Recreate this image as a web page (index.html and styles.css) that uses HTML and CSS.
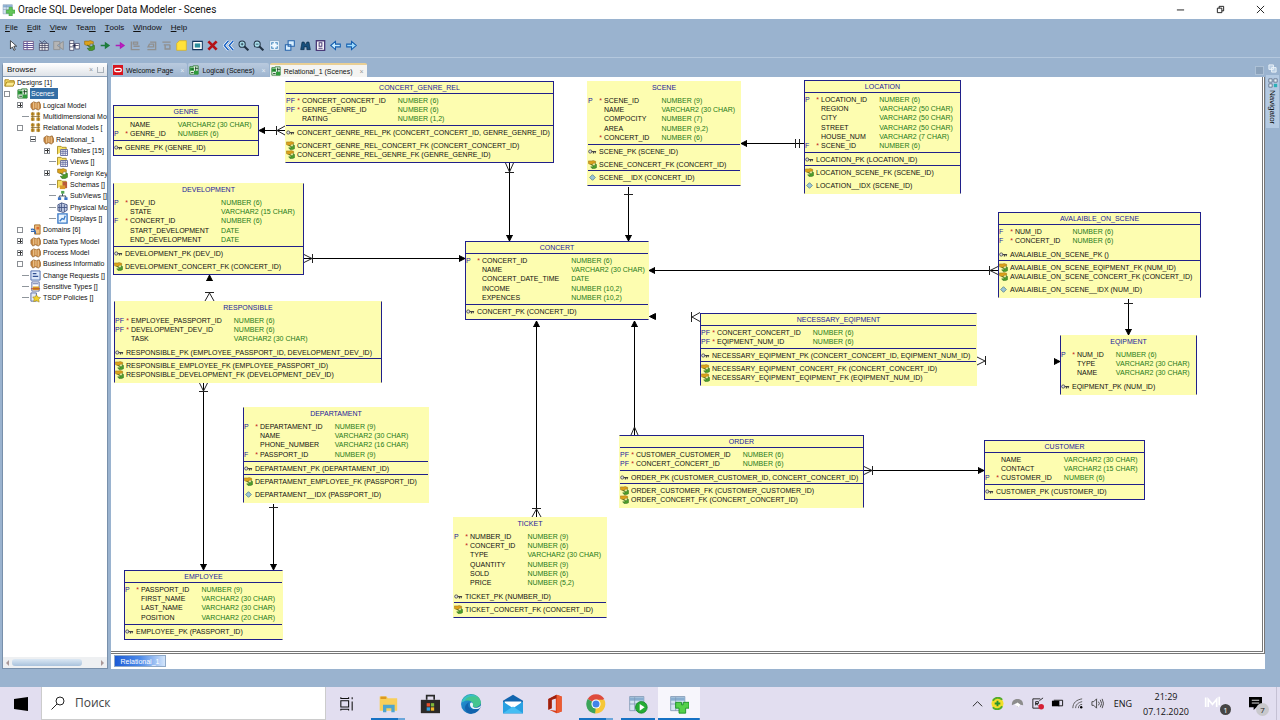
FILE: index.html
```html
<!DOCTYPE html>
<html lang="en">
<head>
<meta charset="utf-8">
<title>Oracle SQL Developer Data Modeler - Scenes</title>
<link rel="stylesheet" href="styles.css">
</head>
<body>
<svg class="defs" width="0" height="0" aria-hidden="true">
<defs>
<linearGradient id="gEdge" x1="0" y1="0" x2="1" y2="1"><stop offset="0" stop-color="#2a9fdc"/><stop offset="1" stop-color="#0c59a4"/></linearGradient>
<symbol id="pk" viewBox="0 0 10 8"><circle cx="2.5" cy="4" r="1.8" fill="#ddd" stroke="#555"/><path d="M4 4h5M6 4v2.200M8 4v2" stroke="#444" stroke-width="1.300" fill="none"/></symbol>
<symbol id="fk" viewBox="0 0 10 10"><path d="M.5 1h4l1-.5 3 1v2h-3v1.500h-3L.5 4z" fill="#dca21c" stroke="#8a6410" stroke-width=".5"/><path d="M3 4.500l2 1.500h3v-2l1.500 1v3.500l-2 1h-3l-1.500-2h3z" fill="#4a9e28" stroke="#28601a" stroke-width=".5"/></symbol>
<symbol id="ix" viewBox="0 0 8 8"><path d="M4 1.500L6.500 4 4 6.500 1.500 4z" fill="#9cc6d8" stroke="#5f8894" stroke-width=".8"/></symbol>
<symbol id="folder" viewBox="0 0 12 12"><path d="M1 10V3h4l1 1h5v2" fill="#f5dc6a" stroke="#a8861a"/><path d="M1 10l2-4.500h9L10 10z" fill="#fbe98b" stroke="#a8861a"/></symbol>
<symbol id="design" viewBox="0 0 12 12"><path d="M1 2h4V1h6v10H1z" fill="#e8f4e8" stroke="#2c7a34"/><path d="M1 3h5v4H1zM6 7h5v4H6z" fill="#2f9c3c"/><path d="M2.500 9h3M3 5h2M8 2v5M7 4h4" stroke="#153f1d"/></symbol>
<symbol id="model" viewBox="0 0 12 12"><path d="M1 4l3-2 3 1 3-1 1.500 3v4L9 11 6 9.500 3 11 1 8z" fill="#c98a45" stroke="#8a5724" stroke-width=".7"/><path d="M4 2.500v7M6.500 3v6M9 3v7" stroke="#f1cf9c"/></symbol>
<symbol id="multi" viewBox="0 0 12 12"><path d="M1 1.500h4v3.500H1zM7 1.500h4v3.500H7zM1 7h4v3.500H1zM7 7h4v3.500H7z" fill="#c8962f"/><path d="M3 1v10M9 1v10M1 6h10" stroke="#7e5d1a" stroke-width=".8"/></symbol>
<symbol id="tables" viewBox="0 0 12 12"><path d="M.5 10V1.500h4l1 1H10V5" fill="#f6de62" stroke="#a88c20"/><path d="M4 5h7.500v6.500H4z" fill="#fff" stroke="#59639b"/><path d="M4 7h7M4 9h7M6.500 5v6M9 5v6" stroke="#59639b" stroke-width=".8"/></symbol>
<symbol id="schema" viewBox="0 0 12 12"><path d="M.5 10V1.500h4l1 1H10V5" fill="#f6de62" stroke="#a88c20"/><path d="M6 3h5v7H6z" fill="#b95a3a"/><path d="M3 7h6v4H3z" fill="#db9b2c"/></symbol>
<symbol id="sub" viewBox="0 0 12 12"><path d="M4.500 1h3.500v3H4.500z" fill="#4fa64f"/><path d="M1 8h3.500v3H1zM8 8h3.500v3H8z" fill="#3b73c8"/><path d="M6 4v2.500M2.500 8V6.500h7V8" stroke="#345" fill="none"/></symbol>
<symbol id="phys" viewBox="0 0 12 12"><path d="M1 3l4-2 6 2v6l-4 2.500-6-2z" fill="#c5d0e8" stroke="#445584"/><path d="M3 3v7M5 1v9M8 3v8M1 6h10" stroke="#445584"/></symbol>
<symbol id="disp" viewBox="0 0 12 12"><path d="M1 1h10v10H1z" fill="#e9f5ff" stroke="#3a7ac8" stroke-width="1.500"/><path d="M3 9l2.500-3 2 1L9 3" fill="none" stroke="#3a7ac8" stroke-width="1.500"/></symbol>
<symbol id="domain" viewBox="0 0 12 12"><path d="M5 1h6v10H5z" fill="#f0c183" stroke="#a56b25"/><path d="M7 3h3v3H7z" fill="#d96f33"/><path d="M1 6c3-1 5 0 5 5M1 8h4" stroke="#356bb5" stroke-width="1.500" fill="none"/></symbol>
<symbol id="req" viewBox="0 0 12 12"><path d="M1 1h10v10H1z" fill="#dce8fa" stroke="#4968a8"/><path d="M3 4h4M3 7h6" stroke="#314f91" stroke-width="1.500"/></symbol>
<symbol id="sens" viewBox="0 0 12 12"><path d="M2 1h8v10H2z" fill="#fff" stroke="#5b6ba3"/><path d="M3 3h6" stroke="#5b6ba3"/><path d="M3 6h7v4H3z" fill="#d99c24"/><path d="M1 8.500h10" stroke="#b84a2c"/></symbol>
<symbol id="tsdp" viewBox="0 0 12 12"><path d="M1 1h6v9H1z" fill="#e4ebf8" stroke="#56689e"/><path d="M7 3l1.500 2.500L11.500 6l-2 2 .5 3-3-1.500-3 1 .6-3L3 5.500l3-.3z" fill="#f2d22c" stroke="#98801b" stroke-width=".6"/></symbol>
<symbol id="appdb" viewBox="0 0 24 24"><path d="M2 3h17v17H2z" fill="#d5e3f1" stroke="#8299b4"/><path d="M2 4h17v4H2z" fill="#89aed0"/><path d="M2 12h17M8 4v16" stroke="#8299b4"/></symbol>
</defs>
</svg>

<header class="titlebar">
  <svg class="app-icon" viewBox="0 0 24 24"><use href="#appdb"/><path d="M13 8h6v5h5v6h-5v5h-6v-5H8v-6h5z" fill="#63c558" stroke="#3a9a38"/></svg>
  <h1>Oracle SQL Developer Data Modeler - Scenes</h1>
  <div class="window-buttons">
    <button aria-label="Minimize"><svg viewBox="0 0 10 10"><path d="M1 5.500h8"/></svg></button>
    <button aria-label="Restore"><svg viewBox="0 0 10 10"><path d="M1.500 3.500h5v5h-5zM3.500 3.500v-2h5v5h-2"/></svg></button>
    <button aria-label="Close"><svg viewBox="0 0 10 10"><path d="M1 1l8 8M9 1l-8 8"/></svg></button>
  </div>
</header>

<nav class="menu">
  <button><u>F</u>ile</button><button><u>E</u>dit</button><button><u>V</u>iew</button><button>Tea<u>m</u></button><button><u>T</u>ools</button><button><u>W</u>indow</button><button><u>H</u>elp</button>
</nav>

<div class="toolbar">
  <button aria-label="Select"><svg viewBox="0 0 16 16"><path d="M5 1v12l3-3 2 5 2-1-2-5h4z" fill="#fff" stroke="#111"/></svg></button>
  <button aria-label="New table"><svg viewBox="0 0 16 16"><path d="M1 2h14v12H1z" fill="#fff" stroke="#536"/><path d="M1 5h14M1 8h14M1 11h14M6 2v12" stroke="#65589a" stroke-width="1.500"/></svg></button>
  <button aria-label="New view"><svg viewBox="0 0 16 16"><path d="M2 5h13v10H2z" fill="#eee" stroke="#335"/><path d="M2 8h13M2 11h13M6 5v10M10 5v10M2 1l4 3 3-3 4 3" stroke="#335" fill="none"/></svg></button>
  <button aria-label="Split table" disabled><svg viewBox="0 0 16 16"><path d="M1 2h9v12H1zM15 2L6 8l9 6z" fill="#b5b5b5" stroke="#888"/></svg></button>
  <button aria-label="Merge tables"><svg viewBox="0 0 16 16"><path d="M1 1h6v14H1zM9 5h6v8H9z" fill="#fff" stroke="#335"/><path d="M1 5h6M1 10h6M5 8h9M8 5v6" stroke="#224"/></svg></button>
  <button aria-label="New foreign key"><svg viewBox="0 0 10 10"><use href="#fk"/></svg></button>
  <button aria-label="Engineer to logical"><svg viewBox="0 0 16 16"><path d="M1 8h8M8 4.500l5 3.500-5 3.500z" fill="#1d8a3c" stroke="#1d7a3c" stroke-width="2"/></svg></button>
  <button aria-label="Engineer"><svg viewBox="0 0 16 16"><path d="M1 8h8M8 4.500l5 3.500-5 3.500z" fill="#c822c8" stroke="#b01cb8" stroke-width="2"/></svg></button>
  <button aria-label="Align" disabled><svg viewBox="0 0 16 16"><path d="M2 2v12h12M5 3h6v3H5zM5 9h9" fill="none" stroke="#909090" stroke-width="2"/></svg></button>
  <button aria-label="Align columns" disabled><svg viewBox="0 0 16 16"><path d="M2 14h12V3H6M5 6h6v4H3z" fill="none" stroke="#909090" stroke-width="2"/></svg></button>
  <button aria-label="Distribute" disabled><svg viewBox="0 0 16 16"><path d="M2 3h12M4 7h9M6 7v6h7V7" fill="none" stroke="#909090" stroke-width="2"/></svg></button>
  <button aria-label="New note"><svg viewBox="0 0 16 16"><path d="M5 1h10v14H1V5z" fill="#ffe23a" stroke="#d7ad17"/></svg></button>
  <button aria-label="New picture"><svg viewBox="0 0 16 16"><path d="M1 2h14v12H1z" fill="#fff" stroke="#12355c" stroke-width="1.500"/><path d="M4 5h8v6H4z" fill="#2b8e9c"/></svg></button>
  <button aria-label="Delete"><svg viewBox="0 0 16 16"><path d="M2 2l12 12M14 2L2 14" stroke="#b31217" stroke-width="4"/></svg></button>
  <button aria-label="Refresh"><svg viewBox="0 0 16 16"><path d="M8 1L2 8l6 7M15 1L9 8l6 7" fill="none" stroke="#fff" stroke-width="4"/><path d="M8 1L2 8l6 7M15 1L9 8l6 7" fill="none" stroke="#125ec4" stroke-width="2"/></svg></button>
  <button aria-label="Zoom in"><svg viewBox="0 0 16 16"><circle cx="6" cy="6" r="4.500" fill="#a9e0ee" stroke="#234" stroke-width="1.500"/><path d="M9 9l6 6" stroke="#234" stroke-width="3"/><path d="M4 6h4M6 4v4" stroke="#123"/></svg></button>
  <button aria-label="Zoom out"><svg viewBox="0 0 16 16"><circle cx="6" cy="6" r="4.500" fill="#a9e0ee" stroke="#234" stroke-width="1.500"/><path d="M9 9l6 6" stroke="#234" stroke-width="3"/><path d="M4 6h4" stroke="#123"/></svg></button>
  <button aria-label="Fit screen"><svg viewBox="0 0 16 16"><path d="M1 1h14v14H1z" fill="#eef8ff" stroke="#7697b8"/><path d="M4 7V4h3M9 4h3v3M12 9v3H9M7 12H4V9" fill="none" stroke="#3d83bb" stroke-width="1.500"/></svg></button>
  <button aria-label="Default size"><svg viewBox="0 0 16 16"><path d="M6 1h9v8H6zM2 7h8v8H2z" fill="#d9efff" stroke="#2463ac" stroke-width="1.500"/></svg></button>
  <button aria-label="Find"><svg viewBox="0 0 16 16"><path d="M3 3h3l1 3h2l1-3h3l2 11h-5v-4H6v4H1z" fill="#174f7c" stroke="#0c2c48"/></svg></button>
  <button aria-label="Report"><svg viewBox="0 0 16 16"><path d="M2 1h12v14H2z" fill="#fff" stroke="#4a3b78" stroke-width="2"/><path d="M6 4h4v5H6zM5 12h6" fill="none" stroke="#4a3b78" stroke-width="1.500"/></svg></button>
  <button aria-label="Back"><svg viewBox="0 0 16 16"><path d="M1 8l7-6v4h7v4H8v4z" fill="#c7ecff" stroke="#145fb0" stroke-width="1.500"/></svg></button>
  <button aria-label="Forward"><svg viewBox="0 0 16 16"><path d="M15 8L8 2v4H1v4h7v4z" fill="#9fdcff" stroke="#145fb0" stroke-width="1.500"/></svg></button>
</div>

<main class="workspace">
  <aside class="browser">
    <div class="browser-head"><h2>Browser</h2><button aria-label="Close browser">×</button><button class="min" aria-label="Minimize browser"></button></div>
    <ul class="tree">
      <li class="l0"><svg><use href="#folder"/></svg>Designs [1]</li>
      <li class="l1"><i class="box"></i><svg><use href="#design"/></svg><span class="selected">Scenes</span></li>
      <li class="l2"><i class="box plus"></i><svg><use href="#model"/></svg>Logical Model</li>
      <li class="l2"><i></i><svg><use href="#multi"/></svg>Multidimensional Mo</li>
      <li class="l2"><i class="box"></i><svg><use href="#multi"/></svg>Relational Models [</li>
      <li class="l3"><i class="box minus"></i><svg><use href="#model"/></svg>Relational_1</li>
      <li class="l4"><i class="box plus"></i><svg><use href="#tables"/></svg>Tables [15]</li>
      <li class="l4"><i></i><svg><use href="#tables"/></svg>Views []</li>
      <li class="l4"><i class="box plus"></i><svg><use href="#fk"/></svg>Foreign Key</li>
      <li class="l4"><i></i><svg><use href="#schema"/></svg>Schemas []</li>
      <li class="l4"><i></i><svg><use href="#sub"/></svg>SubViews []</li>
      <li class="l4"><i></i><svg><use href="#phys"/></svg>Physical Mo</li>
      <li class="l4"><i></i><svg><use href="#disp"/></svg>Displays []</li>
      <li class="l2"><i class="box"></i><svg><use href="#domain"/></svg>Domains [6]</li>
      <li class="l2"><i class="box plus"></i><svg><use href="#model"/></svg>Data Types Model</li>
      <li class="l2"><i class="box plus"></i><svg><use href="#model"/></svg>Process Model</li>
      <li class="l2"><i class="box"></i><svg><use href="#model"/></svg>Business Informatio</li>
      <li class="l2"><i></i><svg><use href="#req"/></svg>Change Requests []</li>
      <li class="l2"><i></i><svg><use href="#sens"/></svg>Sensitive Types []</li>
      <li class="l2"><i></i><svg><use href="#tsdp"/></svg>TSDP Policies []</li>
    </ul>
    <div class="hscroll"><span class="arrow left"></span><span class="thumb"></span><span class="arrow right"></span></div>
  </aside>

  <section class="editor">
    <div class="tabs">
      <button class="tab"><svg viewBox="0 0 12 12"><path d="M0 0h12v12H0z" fill="#d8141c"/><rect x="2" y="4" width="8" height="4" rx="2" fill="none" stroke="#fff" stroke-width="1.500"/></svg>Welcome Page<span>×</span></button>
      <button class="tab"><svg><use href="#design"/></svg>Logical (Scenes)<span>×</span></button>
      <button class="tab active"><svg><use href="#design"/></svg>Relational_1 (Scenes)<span>×</span></button>
      <button class="tab-list" aria-label="Tab list"></button>
    </div>

    <div class="canvas">
      <svg class="links" width="1150" height="570" aria-hidden="true">
        <defs><marker id="arr" markerUnits="userSpaceOnUse" markerWidth="7" markerHeight="8" refX="6" refY="4" orient="auto-start-reverse"><path d="M0 1l6 3-6 3z"/></marker></defs>
        <g transform="translate(-111 -77)">
          <g marker-end="url(#arr)">
            <path d="M285 130.500H259"/><path d="M509.500 163v78"/><path d="M628.500 187v54"/><path d="M804 143.500h-63"/>
            <path d="M304 258.500h161"/><path d="M998 270.500H649"/><path d="M1128.500 299v36"/><path d="M650.500 316.500h-1"/>
            <path d="M1059 361.500h1"/><path d="M209.500 276v-1"/><path d="M203.500 383v187"/><path d="M273.500 504v66"/>
            <path d="M536.500 517V321"/><path d="M634.500 435V321"/><path d="M864 470.500h120"/>
          </g>
          <path class="thin" d="M276.500 126v9M285 126l-8 4.500 8 4.500"/>
          <path class="thin" d="M505 172.500h9M505.500 163l4 9 4-9"/>
          <path class="thin" d="M624 194.500h9M795.500 139v9M799.500 139v9"/>
          <path class="thin" d="M312.500 254v9M304 254.500l8 4-8 4"/>
          <path class="thin" d="M989.500 266v9M998 266.500l-8 4 8 4"/>
          <path class="thin" d="M1124 303.500h9"/>
          <path class="thin" d="M691.500 312v10M700 312.500l-8 4.500 8 4.500"/>
          <path class="thin" d="M985.500 356v9M977 357l8 4-8 4"/>
          <path class="thin" d="M205 292.500h9M205 301l4.500-8 4.500 8"/>
          <path class="thin" d="M199 391.500h9M199.500 383l4 8 4-8"/>
          <path class="thin" d="M269 507.500h9"/>
          <path class="thin" d="M532 508.500h9M532 517l4.500-8 4.500 8"/>
          <path class="thin" d="M631 435l3.500-8 3.500 8"/>
          <path class="thin" d="M872.500 466v9M864 466.500l8 4-8 4"/>
        </g>
      </svg>

      <article class="node" style="left:2px;top:28px;width:146px"><h3>GENRE</h3>
        <div><table><tr><td><td><td>NAME<td>VARCHAR2 (30 CHAR)<tr><td>P<td>*<td>GENRE_ID<td>NUMBER (6)</table></div>
        <ul><li><svg><use href="#pk"/></svg>GENRE_PK (GENRE_ID)</ul></article>

      <article class="node no-l" style="left:174px;top:4px;width:269px"><h3>CONCERT_GENRE_REL</h3>
        <div><table><tr><td>PF<td>*<td>CONCERT_CONCERT_ID<td>NUMBER (6)<tr><td>PF<td>*<td>GENRE_GENRE_ID<td>NUMBER (6)<tr><td><td><td>RATING<td>NUMBER (1,2)</table></div>
        <ul><li><svg><use href="#pk"/></svg>CONCERT_GENRE_REL_PK (CONCERT_CONCERT_ID, GENRE_GENRE_ID)</ul>
        <ul class="plain"><li><svg><use href="#fk"/></svg>CONCERT_GENRE_REL_CONCERT_FK (CONCERT_CONCERT_ID)<li><svg><use href="#fk"/></svg>CONCERT_GENRE_REL_GENRE_FK (GENRE_GENRE_ID)</ul></article>

      <article class="node no-t no-l no-r" style="left:476px;top:4px;width:154px"><h3>SCENE</h3>
        <div class="plain"><table><tr><td>P<td>*<td>SCENE_ID<td>NUMBER (9)<tr><td><td><td>NAME<td>VARCHAR2 (30 CHAR)<tr><td><td><td>COMPOCITY<td>NUMBER (7)<tr><td><td><td>AREA<td>NUMBER (9,2)<tr><td><td>*<td>CONCERT_ID<td>NUMBER (6)</table></div>
        <ul><li><svg><use href="#pk"/></svg>SCENE_PK (SCENE_ID)</ul>
        <ul class="plain"><li><svg><use href="#fk"/></svg>SCENE_CONCERT_FK (CONCERT_ID)</ul>
        <ul><li><svg><use href="#ix"/></svg>SCENE__IDX (CONCERT_ID)</ul></article>

      <article class="node no-b" style="left:693px;top:3px;width:157px"><h3>LOCATION</h3>
        <div><table><tr><td>P<td>*<td>LOCATION_ID<td>NUMBER (6)<tr><td><td><td>REGION<td>VARCHAR2 (50 CHAR)<tr><td><td><td>CITY<td>VARCHAR2 (50 CHAR)<tr><td><td><td>STREET<td>VARCHAR2 (50 CHAR)<tr><td><td><td>HOUSE_NUM<td>VARCHAR2 (7 CHAR)<tr><td>F<td>*<td>SCENE_ID<td>NUMBER (6)</table></div>
        <ul><li><svg><use href="#pk"/></svg>LOCATION_PK (LOCATION_ID)</ul>
        <ul><li><svg><use href="#fk"/></svg>LOCATION_SCENE_FK (SCENE_ID)</ul>
        <ul class="plain"><li><svg><use href="#ix"/></svg>LOCATION__IDX (SCENE_ID)</ul></article>

      <article class="node no-t" style="left:2px;top:106px;width:191px"><h3>DEVELOPMENT</h3>
        <div class="plain"><table><tr><td>P<td>*<td>DEV_ID<td>NUMBER (6)<tr><td><td><td>STATE<td>VARCHAR2 (15 CHAR)<tr><td>F<td>*<td>CONCERT_ID<td>NUMBER (6)<tr><td><td><td>START_DEVELOPMENT<td>DATE<tr><td><td><td>END_DEVELOPMENT<td>DATE</table></div>
        <ul><li><svg><use href="#pk"/></svg>DEVELOPMENT_PK (DEV_ID)</ul>
        <ul class="plain"><li><svg><use href="#fk"/></svg>DEVELOPMENT_CONCERT_FK (CONCERT_ID)</ul></article>

      <article class="node no-t no-b" style="left:3px;top:224px;width:268px"><h3>RESPONSIBLE</h3>
        <div class="plain"><table><tr><td>PF<td>*<td>EMPLOYEE_PASSPORT_ID<td>NUMBER (6)<tr><td>PF<td>*<td>DEVELOPMENT_DEV_ID<td>NUMBER (6)<tr><td><td><td>TASK<td>VARCHAR2 (30 CHAR)</table></div>
        <ul class="plain"><li><svg><use href="#pk"/></svg>RESPONSIBLE_PK (EMPLOYEE_PASSPORT_ID, DEVELOPMENT_DEV_ID)</ul>
        <ul><li><svg><use href="#fk"/></svg>RESPONSIBLE_EMPLOYEE_FK (EMPLOYEE_PASSPORT_ID)<li><svg><use href="#fk"/></svg>RESPONSIBLE_DEVELOPMENT_FK (DEVELOPMENT_DEV_ID)</ul></article>

      <article class="node no-r" style="left:354px;top:164px;width:184px"><h3>CONCERT</h3>
        <div><table><tr><td>P<td>*<td>CONCERT_ID<td>NUMBER (6)<tr><td><td><td>NAME<td>VARCHAR2 (30 CHAR)<tr><td><td><td>CONCERT_DATE_TIME<td>DATE<tr><td><td><td>INCOME<td>NUMBER (10,2)<tr><td><td><td>EXPENCES<td>NUMBER (10,2)</table></div>
        <ul><li><svg><use href="#pk"/></svg>CONCERT_PK (CONCERT_ID)</ul></article>

      <article class="node no-b" style="left:887px;top:135px;width:203px"><h3>AVALAIBLE_ON_SCENE</h3>
        <div><table><tr><td>F<td>*<td>NUM_ID<td>NUMBER (6)<tr><td>F<td>*<td>CONCERT_ID<td>NUMBER (6)</table></div>
        <ul class="plain"><li><svg><use href="#pk"/></svg>AVALAIBLE_ON_SCENE_PK ()</ul>
        <ul><li><svg><use href="#fk"/></svg>AVALAIBLE_ON_SCENE_EQIPMENT_FK (NUM_ID)<li><svg><use href="#fk"/></svg>AVALAIBLE_ON_SCENE_CONCERT_FK (CONCERT_ID)</ul>
        <ul class="plain"><li><svg><use href="#ix"/></svg>AVALAIBLE_ON_SCENE__IDX (NUM_ID)</ul></article>

      <article class="node no-r no-b" style="left:589px;top:236px;width:277px"><h3>NECESSARY_EQIPMENT</h3>
        <div><table><tr><td>PF<td>*<td>CONCERT_CONCERT_ID<td>NUMBER (6)<tr><td>PF<td>*<td>EQIPMENT_NUM_ID<td>NUMBER (6)</table></div>
        <ul><li><svg><use href="#pk"/></svg>NECESSARY_EQIPMENT_PK (CONCERT_CONCERT_ID, EQIPMENT_NUM_ID)</ul>
        <ul><li><svg><use href="#fk"/></svg>NECESSARY_EQIPMENT_CONCERT_FK (CONCERT_CONCERT_ID)<li><svg><use href="#fk"/></svg>NECESSARY_EQIPMENT_EQIPMENT_FK (EQIPMENT_NUM_ID)</ul></article>

      <article class="node no-t no-b" style="left:949px;top:258px;width:137px"><h3>EQIPMENT</h3>
        <div class="plain"><table><tr><td>P<td>*<td>NUM_ID<td>NUMBER (6)<tr><td><td><td>TYPE<td>VARCHAR2 (30 CHAR)<tr><td><td><td>NAME<td>VARCHAR2 (30 CHAR)</table></div>
        <ul class="plain"><li><svg><use href="#pk"/></svg>EQIPMENT_PK (NUM_ID)</ul></article>

      <article class="node no-t no-r no-b" style="left:132px;top:330px;width:186px"><h3>DEPARTAMENT</h3>
        <div class="plain"><table><tr><td>P<td>*<td>DEPARTAMENT_ID<td>NUMBER (9)<tr><td><td><td>NAME<td>VARCHAR2 (30 CHAR)<tr><td><td><td>PHONE_NUMBER<td>VARCHAR2 (16 CHAR)<tr><td>F<td>*<td>PASSPORT_ID<td>NUMBER (9)</table></div>
        <ul><li><svg><use href="#pk"/></svg>DEPARTAMENT_PK (DEPARTAMENT_ID)</ul>
        <ul><li><svg><use href="#fk"/></svg>DEPARTAMENT_EMPLOYEE_FK (PASSPORT_ID)</ul>
        <ul class="plain"><li><svg><use href="#ix"/></svg>DEPARTAMENT__IDX (PASSPORT_ID)</ul></article>

      <article class="node no-l no-b" style="left:508px;top:358px;width:245px"><h3>ORDER</h3>
        <div><table><tr><td>PF<td>*<td>CUSTOMER_CUSTOMER_ID<td>NUMBER (6)<tr><td>PF<td>*<td>CONCERT_CONCERT_ID<td>NUMBER (6)</table></div>
        <ul><li><svg><use href="#pk"/></svg>ORDER_PK (CUSTOMER_CUSTOMER_ID, CONCERT_CONCERT_ID)</ul>
        <ul><li><svg><use href="#fk"/></svg>ORDER_CUSTOMER_FK (CUSTOMER_CUSTOMER_ID)<li><svg><use href="#fk"/></svg>ORDER_CONCERT_FK (CONCERT_CONCERT_ID)</ul></article>

      <article class="node" style="left:873px;top:363px;width:161px"><h3>CUSTOMER</h3>
        <div><table><tr><td><td><td>NAME<td>VARCHAR2 (30 CHAR)<tr><td><td><td>CONTACT<td>VARCHAR2 (15 CHAR)<tr><td>P<td>*<td>CUSTOMER_ID<td>NUMBER (6)</table></div>
        <ul><li><svg><use href="#pk"/></svg>CUSTOMER_PK (CUSTOMER_ID)</ul></article>

      <article class="node no-t no-l no-r" style="left:342px;top:440px;width:154px"><h3>TICKET</h3>
        <div class="plain"><table><tr><td>P<td>*<td>NUMBER_ID<td>NUMBER (9)<tr><td><td>*<td>CONCERT_ID<td>NUMBER (6)<tr><td><td><td>TYPE<td>VARCHAR2 (30 CHAR)<tr><td><td><td>QUANTITY<td>NUMBER (9)<tr><td><td><td>SOLD<td>NUMBER (6)<tr><td><td><td>PRICE<td>NUMBER (5,2)</table></div>
        <ul class="plain"><li><svg><use href="#pk"/></svg>TICKET_PK (NUMBER_ID)</ul>
        <ul><li><svg><use href="#fk"/></svg>TICKET_CONCERT_FK (CONCERT_ID)</ul></article>

      <article class="node no-r" style="left:13px;top:493px;width:159px"><h3>EMPLOYEE</h3>
        <div><table><tr><td>P<td>*<td>PASSPORT_ID<td>NUMBER (9)<tr><td><td><td>FIRST_NAME<td>VARCHAR2 (30 CHAR)<tr><td><td><td>LAST_NAME<td>VARCHAR2 (30 CHAR)<tr><td><td><td>POSITION<td>VARCHAR2 (20 CHAR)</table></div>
        <ul><li><svg><use href="#pk"/></svg>EMPLOYEE_PK (PASSPORT_ID)</ul></article>
    </div>
    <div class="sheets"><button>Relational_1</button></div>
  </section>

  <aside class="dock">
    <button class="restore" aria-label="Restore"><svg viewBox="0 0 10 10"><path d="M1 1h5v5H1zM4 4h5v5H4z" fill="#bcd0e5" stroke="#eef5fb"/></svg></button>
    <button class="navigator"><svg viewBox="0 0 12 12"><path d="M1 1h4v4H1zM7 1h4v4H7zM1 7h4v4H1z" fill="#e8f5fa" stroke="#5b6a86"/><path d="M7 7h4v4H7z" fill="#2bb0b8"/></svg>Navigator</button>
  </aside>
</main>

<footer class="taskbar">
  <button class="start" aria-label="Start"><svg viewBox="0 0 14 14"><path d="M0 2l14-2v14L0 12z"/></svg></button>
  <label class="search"><svg viewBox="0 0 14 14"><circle cx="9" cy="5" r="4"/><path d="M6 8l-5.500 5.500"/></svg><input type="text" placeholder="Поиск" aria-label="Поиск"></label>
  <div class="apps">
    <button aria-label="Task view"><svg viewBox="0 0 24 24"><path d="M4 8h11v9H4zM4 3v2h11V3M4 22v-2h11v2M20 9v13M20 3v3" fill="none" stroke="#111" stroke-width="1.500"/></svg></button>
    <button class="running more" aria-label="File Explorer"><svg viewBox="0 0 24 24"><path d="M2 3h8l2 2h11v15H2z" fill="#f8cf5b"/><path d="M3 3h7v3H3z" fill="#dd9a20"/><path d="M6 22v-9h14v9h-4v-5h-6v5z" fill="#4ea5cf"/></svg></button>
    <button aria-label="Microsoft Store"><svg viewBox="0 0 24 24"><path d="M8 7V2h9v5" fill="none" stroke="#2a2a2a" stroke-width="2"/><path d="M1 7h23v16H1z" fill="#2b2928"/><path d="M8 11h4v4H8z" fill="#e8502c"/><path d="M13 11h4v4h-4z" fill="#7eb83c"/><path d="M8 16h4v4H8z" fill="#32a0dc"/><path d="M13 16h4v4h-4z" fill="#f4b728"/></svg></button>
    <button aria-label="Edge"><svg viewBox="0 0 24 24"><circle cx="12" cy="12" r="12" fill="url(#gEdge)"/><path d="M1 10C3-2 22-3 24 10c0 6-8 7-10 5 3-6-6-10-13-5z" fill="#45c58f"/><path d="M1 10C4 0 16-1 20 4c-7-3-15 0-15 4z" fill="#36bed2"/><path d="M10 10c-4 5 1 11 11 9-3 3-8 5-12 4-7-5-4-11 1-13z" fill="#1263ad"/><path d="M14 15c3 3 7 1 10-1-1 4-4 4-7 4-4 0-7-3-6-7 1-2 5 0 3 4z" fill="#eaf5f8"/></svg></button>
    <button aria-label="Mail"><svg viewBox="0 0 24 24"><path d="M0 8l12-7 12 7v15H0z" fill="#1265ae"/><path d="M2 9h20v9H2z" fill="#fff"/><path d="M0 9l12 8L24 9v14H0z" fill="#28a0e2"/><path d="M0 23l12-8 12 8z" fill="#45bdf3"/></svg></button>
    <button aria-label="Office"><svg viewBox="0 0 24 24"><path d="M4 6l10-5 6 2v18l-6 2-9-4 8 1V5L8 7v10l-4 2z" fill="#d83b16"/><path d="M4 6l10-5v4L8 7v10l-4 2z" fill="#9c2110"/><path d="M14 1l6 2v18l-6 2z" fill="#ec5b32"/></svg></button>
    <button class="running more" aria-label="Chrome"><svg viewBox="0 0 24 24"><path d="M12 12L2 6a11.500 11.500 0 0 1 20 0z" fill="#de4b3d"/><path d="M12 12L2 6a11.500 11.500 0 0 0 9 17.500l5-9z" fill="#3ba459"/><path d="M12 12l-1 11.500A11.500 11.500 0 0 0 22 7H12z" fill="#f6c736"/><circle cx="12" cy="12" r="5.500" fill="#fff"/><circle cx="12" cy="12" r="4.200" fill="#4284e8"/></svg></button>
    <button class="running" aria-label="SQL Developer"><svg viewBox="0 0 24 24"><use href="#appdb"/><circle cx="16" cy="16" r="7" fill="#25ad34" stroke="#14832a"/><path d="M14 12l6 4-6 4z" fill="#fff"/></svg></button>
    <button class="running current" aria-label="Data Modeler"><svg viewBox="0 0 24 24"><use href="#appdb"/><path d="M8 10h7v3h2v-3h7v7h-4v6h-8v-6H8z" fill="#55d14a" stroke="#158d20"/></svg></button>
  </div>
  <div class="tray">
    <button aria-label="Hidden icons"><svg viewBox="0 0 14 14"><path d="M2 10l5-5 5 5" fill="none" stroke="#222"/></svg></button>
    <button aria-label="Antivirus"><svg viewBox="0 0 14 14"><circle cx="7" cy="7" r="6.500" fill="#f3de29"/><path d="M2 4A6 6 0 0 1 12 3M12 10A6 6 0 0 1 2 11" stroke="#52ac2b" stroke-width="2" fill="none"/><path d="M7 4v6M4 7h6" stroke="#27912e" stroke-width="2"/></svg></button>
    <button aria-label="Device"><svg viewBox="0 0 14 14"><path d="M1 9C0 0 14 0 13 9l-4-1-2 3-2-4z" fill="#8d8d8d"/><path d="M4 8l3-2 3 2-2 3z" fill="#fff"/></svg></button>
    <button aria-label="Radeon"><svg viewBox="0 0 14 14"><path d="M10 2H2v10h7M5 9V5h3v2H5l3 2M9 4l4-3" fill="none" stroke="#222"/><circle cx="11" cy="10.500" r="3" fill="#d51f34"/></svg></button>
    <button aria-label="Battery"><svg viewBox="0 0 14 14"><path d="M1 4h8v6H1z"/><path d="M3 3.500h9.500v6H8" fill="none" stroke="#111"/></svg></button>
    <button aria-label="Network"><svg viewBox="0 0 14 14"><path d="M2 12C2 6 6 3 12 2M5 12c0-4 3-6 7-7M8 12c0-2 1-4 4-4" fill="none" stroke="#555"/><circle cx="11" cy="11" r="1.300"/></svg></button>
    <button aria-label="Volume"><svg viewBox="0 0 14 14"><path d="M1 5h2l3-3v10L3 9H1zM8 5q2 2 0 4M10 3q3 4 0 8M12 2q3 5 0 10" fill="none" stroke="#444"/></svg></button>
    <button class="lang">ENG</button>
    <button class="clock"><time>21:29</time><time>07.12.2020</time></button>
    <button class="im" aria-label="Messages"><svg viewBox="0 0 26 20"><path d="M2 3v11M5 14V5l5 6 5-6v9M18 2v10" fill="none" stroke="#fff" stroke-width="2"/></svg><b>1</b></button>
    <button class="notes" aria-label="Notifications"><svg viewBox="0 0 14 14"><path d="M0 0h14v11H8l-3 3v-3H0z"/><path d="M3 3.500h8M3 6.500h8" stroke="#eee"/></svg><b>7</b></button>
  </div>
</footer>
</body>
</html>
```
FILE: styles.css
```css
* { box-sizing: border-box; }
body {
  margin: 0;
  height: 100vh;
  display: flex;
  flex-direction: column;
  overflow: hidden;
  background: #9ab3cf;
  color: #111;
  font: 7px/11px "Liberation Sans", Arial, sans-serif;
}
button {
  margin: 0;
  padding: 0;
  border: 0;
  background: none;
  color: inherit;
  font: inherit;
  display: flex;
  align-items: center;
  justify-content: center;
}
h1, h2, h3, ul { margin: 0; padding: 0; font: inherit; list-style: none; }
svg { display: block; flex: none; }
.defs { position: absolute; }

/* title bar */
.titlebar {
  flex: none;
  height: 19px;
  display: flex;
  align-items: center;
  gap: 3px;
  padding-left: 2px;
  background: #fff;
}
.app-icon { width: 13px; height: 13px; }
.titlebar h1 { flex: 1; font: 10px/18px Roboto, "Open Sans", sans-serif; }
.window-buttons { display: flex; }
.window-buttons button { width: 40px; height: 18px; }
.window-buttons svg { width: 9px; height: 9px; fill: none; stroke: #111; }

/* menu and toolbar */
.menu { flex: none; display: flex; gap: 9px; padding: 3px 5px 0; font-size: 8px; line-height: 11px; }
.menu button { height: 11px; }
.toolbar {
  flex: none;
  display: grid;
  grid-template-columns: repeat(23, 1fr);
  width: 354px;
  height: 24px;
  margin-left: 5px;
  align-items: center;
}
.toolbar svg { width: 11px; height: 11px; }

/* workspace */
.workspace {
  flex: 1;
  min-height: 0;
  display: flex;
  padding: 5px 0 18px 2px;
  border-top: 1px solid #b4c8de;
}
.browser {
  flex: none;
  width: 106px;
  margin-right: 3px;
  display: flex;
  flex-direction: column;
  background: #fff;
  border: 1px solid #7890ab;
  border-top: 0;
  border-radius: 3px 3px 0 0;
}
.browser-head {
  display: flex;
  align-items: center;
  height: 14px;
  padding: 0 3px 0 4px;
  background: linear-gradient(#fff, #dfe3e8);
  border-bottom: 1px solid #8ba0b8;
}
.browser-head h2 { flex: 1; font-size: 8px; }
.browser-head button { width: 12px; color: #8c949c; }
.browser-head .min { width: 7px; height: 6px; border: 1px solid #aab2ba; border-top: 0; }
.tree { flex: 1; overflow: hidden; }
.tree li { display: flex; align-items: center; height: 11px; white-space: nowrap; }
.tree li:nth-child(3n) { height: 12px; }
.tree svg { width: 11px; height: 11px; margin-right: 2px; }
.tree i {
  flex: none;
  width: 13px;
  height: 7px;
  background: linear-gradient(#8f959b, #8f959b) 5px 3px / 7px 1px no-repeat;
}
.tree i.box { width: 6px; height: 6px; margin-right: 7px; border: 1px solid #8b8f94; background: #fff; }
.tree i.plus { background: linear-gradient(#333, #333) center / 4px 1px no-repeat, linear-gradient(#333, #333) center / 1px 4px no-repeat; }
.tree i.minus { background: linear-gradient(#333, #333) center / 4px 1px no-repeat; }
.l0, .l1 { padding-left: 1px; }
.l2 { padding-left: 14px; }
.l3 { padding-left: 27px; }
.l4 { padding-left: 41px; }
.selected { background: #336da5; color: #fff; padding: 0 4px 0 1px; }
.hscroll { display: flex; align-items: center; gap: 3px; height: 11px; padding: 0 3px; background: #eef0f2; }
.thumb { width: 70px; height: 7px; border-radius: 3px; background: linear-gradient(#dbe8f4, #a9c2dc); }
.arrow { border: 3px solid transparent; }
.arrow.left { border-right-color: #a99; border-left: 0; }
.arrow.right { border-left-color: #a99; border-right: 0; margin-left: auto; }

/* editor */
.editor { flex: 1; min-width: 0; display: flex; flex-direction: column; }
.tabs { display: flex; height: 14px; gap: 1px; align-items: stretch; padding-left: 1px; }
.tab { padding: 0 3px 0 1px; background: linear-gradient(#b9cade, #9db4cf); border-radius: 2px 2px 0 0; }
.tab svg { width: 10px; height: 10px; margin-right: 3px; }
.tab span { margin-left: 7px; color: #e4edf5; }
.tab.active { background: #f4f4f2; border-top: 2px solid #e9cf94; }
.tab.active span { color: #999; }
.tab-list { width: 9px; height: 9px; margin: 3px 1px 0 auto; background: #8ba2bb; border: 1px solid #adc1d6; }
.canvas {
  position: relative;
  flex: 1;
  min-height: 0;
  overflow: hidden;
  background: #fff;
  border-right: 3px double #777;
  border-bottom: 3px double #777;
}
.links { position: absolute; left: 0; top: 0; fill: none; stroke: #000; }
.links marker path { fill: #000; stroke: #000; }
.links .thin { stroke: #222; }
.sheets { flex: none; height: 15px; padding: 1px 3px 2px; background: #fff; }
.sheets button {
  width: 52px;
  height: 12px;
  background: linear-gradient(90deg, #1c5bd6, #4d8ae8 50%, #d3e5fb);
  border: 1px solid #8fa9c8;
  color: #fff;
}

/* diagram tables */
.node { position: absolute; background: #fdfdb0; border: 1px solid #20208a; line-height: 9px; white-space: nowrap; }
.node h3 { height: 11px; line-height: 12px; text-align: center; color: #1b1b9c; }
.node > div, .node > ul { border-top: 1px solid #20208a; padding: 2px 0 1px; }
.node > div { padding-bottom: 2px; }
.node > ul:last-child { padding-bottom: 3px; }
.node > .plain { border-top-color: transparent; }
.no-t { border-top-color: #fdfdb0; }
.no-r { border-right-color: #fdfdb0; }
.no-b { border-bottom-color: #fdfdb0; }
.no-l { border-left-color: #fdfdb0; }
.node table { border-collapse: collapse; }
.node tr { height: 9px; }
.node tr:nth-child(4) { height: 10px; }
.node td { padding: 0; vertical-align: bottom; }
.node td:nth-child(1) { min-width: 9px; width: 9px; color: #1b1b9c; }
.node td:nth-child(2) { min-width: 7px; width: 7px; color: #c02020; text-align: center; }
.node td:nth-child(3) { padding-right: 12px; }
.node td:nth-child(4) { color: #1f7a1a; }
.node li { display: flex; align-items: center; gap: 2px; height: 9px; }
.node li svg { width: 9px; height: 9px; }

/* right dock */
.dock { flex: none; width: 15px; display: flex; flex-direction: column; align-items: center; gap: 2px; padding-top: 1px; }
.restore svg { width: 9px; height: 9px; }
.navigator { writing-mode: vertical-rl; width: 13px; height: 53px; gap: 2px; background: #b4cae2; font-size: 8px; }
.navigator svg { width: 10px; height: 10px; }

/* task bar */
.taskbar { flex: none; height: 33px; display: flex; background: #e2def0; font-family: "Open Sans", "Noto Sans", sans-serif; }
.start { width: 41px; }
.start svg { width: 14px; height: 14px; }
.search { width: 285px; display: flex; align-items: center; gap: 10px; padding-left: 9px; background: #fff; border: 1px solid #ccc; border-top: 0; }
.search svg { width: 14px; height: 14px; fill: none; stroke: #222; }
.search input { flex: 1; min-width: 0; padding: 0; border: 0; outline: 0; background: none; font: 12px/18px "Open Sans", "Noto Sans", sans-serif; }
.search input::placeholder { color: #444; opacity: 1; }
.apps { display: grid; grid-template-columns: repeat(9, 1fr); width: 374px; }
.apps svg { width: 20px; height: 20px; }
.apps button:first-child svg { width: 17px; height: 17px; }
.running { background: linear-gradient(#1672c4, #1672c4) center bottom / 34px 2px no-repeat; }
.more { background: linear-gradient(90deg, #1672c4 80%, #6ba6da 80%) center bottom / 34px 2px no-repeat; }
.current { background: linear-gradient(#1672c4, #1672c4) center bottom / 100% 2px no-repeat, #f7f6fc; }
.tray { display: flex; margin-left: auto; padding-right: 3px; border-right: 1px solid #c5c1d4; margin-right: 3px; }
.tray button { width: 20px; }
.tray svg { width: 13px; height: 13px; }
.tray .lang { width: 32px; font-size: 9px; }
.tray .clock { width: 54px; flex-direction: column; font-size: 9px; line-height: 15px; }
.tray .im, .tray .notes { position: relative; width: 44px; }
.tray .notes { width: 36px; }
.tray .im svg { width: 22px; height: 17px; }
.tray b {
  position: absolute;
  right: 6px;
  bottom: 5px;
  width: 11px;
  height: 11px;
  border-radius: 50%;
  background: #444;
  color: #fff;
  font: 8px/11px "Open Sans", sans-serif;
  text-align: center;
}
.tray .notes b { right: 4px; bottom: 4px; width: 13px; height: 13px; line-height: 13px; background: #c8c8cc; color: #222; }
```
